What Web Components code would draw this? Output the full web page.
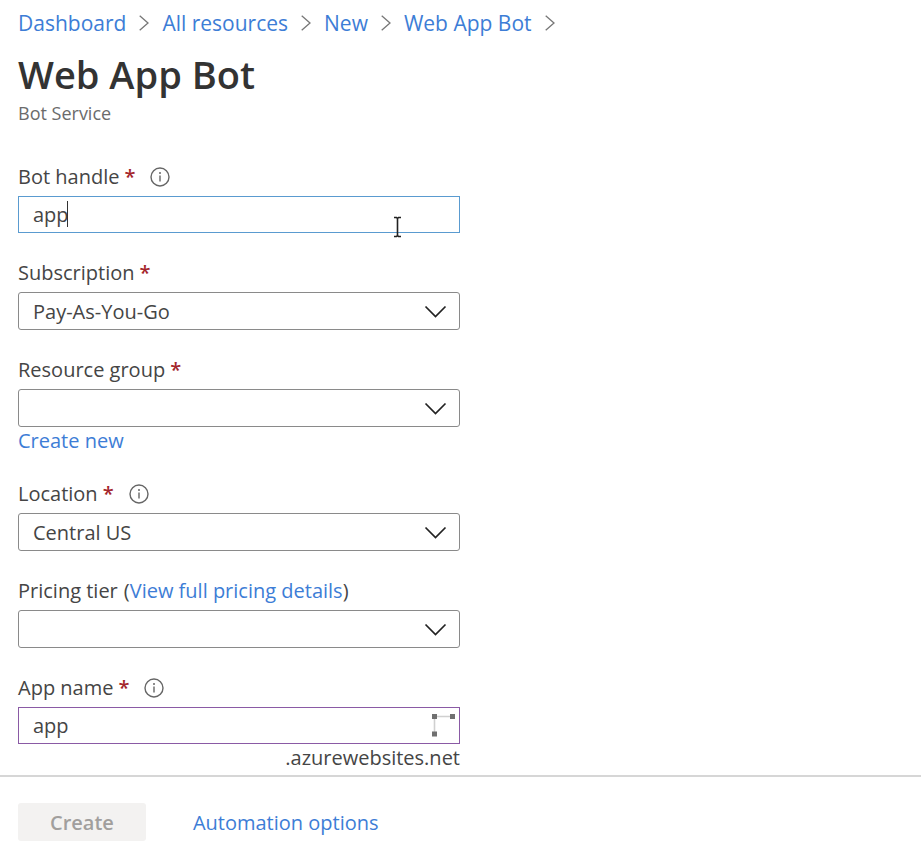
<!DOCTYPE html>
<html lang="en">
<head>
<meta charset="utf-8">
<title>Web App Bot</title>
<style>
  :root { --link: #3d7dd6; --text: #454545; --required: #a4262c; --line: #8a8a8a; }
  html, body { margin: 0; }
  body { font-family: "Open Sans", "Noto Sans", sans-serif; font-size: 20px; color: var(--text); background: #fff; }
</style>
</head>
<body>
<create-page>
  <bread-crumbs slot="header">
    <crumb-link>Dashboard</crumb-link>
    <crumb-link>All resources</crumb-link>
    <crumb-link>New</crumb-link>
    <crumb-link>Web App Bot</crumb-link>
  </bread-crumbs>
  <page-title slot="header" heading="Web App Bot" subtitle="Bot Service"></page-title>

  <text-field label="Bot handle" value="app" required info active></text-field>
  <select-field label="Subscription" value="Pay-As-You-Go" required></select-field>
  <select-field label="Resource group" required><text-link slot="hint">Create new</text-link></select-field>
  <select-field label="Location" value="Central US" required info></select-field>
  <select-field label="Pricing tier"><span slot="extra">(<text-link>View full pricing details</text-link>)</span></select-field>
  <text-field label="App name" value="app" required info validating><span slot="hint">.azurewebsites.net</span></text-field>

  <action-bar slot="footer"></action-bar>
</create-page>

<script>
const define = (name, html, setup) => {
  const template = document.createElement('template');
  template.innerHTML = html;
  customElements.define(name, class extends HTMLElement {
    constructor() {
      super();
      this.attachShadow({ mode: 'open' }).append(template.content.cloneNode(true));
    }
    connectedCallback() { if (setup) setup(this, this.shadowRoot); }
  });
};

define('create-page', `
  <style>
    :host { display: flex; flex-direction: column; min-height: 100vh; }
    main { flex: 1; padding: 6px 18px 4px; box-sizing: border-box; }
    form { display: flex; flex-direction: column; gap: 25px; max-width: 442px; margin-top: 36px; }
  </style>
  <main>
    <slot name="header"></slot>
    <form><slot></slot></form>
  </main>
  <slot name="footer"></slot>`);

define('bread-crumbs', `
  <style>
    :host { display: block; }
    nav { display: flex; flex-wrap: wrap; gap: 13px; line-height: 34px; font-size: 21px; }
  </style>
  <nav aria-label="Breadcrumb"><slot></slot></nav>`);

define('crumb-link', `
  <style>
    :host { display: inline-flex; align-items: center; gap: 13px; }
    a { color: var(--link); text-decoration: none; }
    svg { width: 10px; height: 16px; fill: none; stroke: #777; stroke-width: 1.3; }
  </style>
  <a href="#"><slot></slot></a>
  <svg viewBox="0 0 10 16" aria-hidden="true"><path d="M.7.7 9 8 .7 15.3"/></svg>`);

define('text-link', `<style>:host { display: inline; } a { color: var(--link); text-decoration: none; }</style><a href="#"><slot></slot></a>`);

define('page-title', `
  <style>
    :host { display: block; }
    h1 { margin: 8px 0 0; font-size: 38px; line-height: 52px; font-weight: 600; color: #333; }
    p { margin: 0; font-size: 18px; line-height: 26px; color: #6b6b6b; }
  </style>
  <h1></h1><p></p>`, (host, root) => {
  root.querySelector('h1').textContent = host.getAttribute('heading');
  root.querySelector('p').textContent = host.getAttribute('subtitle');
});

define('info-icon', `
  <style>
    :host { display: inline-flex; }
    :host([hidden]) { display: none; }
    svg { width: 20px; height: 20px; fill: none; stroke: #666; stroke-width: 1.4; }
    .dot { fill: #666; stroke: none; }
  </style>
  <svg viewBox="0 0 20 20" role="img" aria-label="More information">
    <circle cx="10" cy="10" r="9"/><path d="M10 8.4v6.2"/><circle class="dot" cx="10" cy="5.9" r="1"/>
  </svg>`);

const fieldStyles = `
  :host { display: block; }
  .caption { display: flex; align-items: center; line-height: 30px; margin-bottom: 4px; }
  .required { color: var(--required); margin-left: 5px; font-weight: 600; }
  info-icon { margin-left: 15px; }
  ::slotted([slot="extra"]) { margin-left: 6px; }
  .box { position: relative; }
  input, select { display: block; box-sizing: border-box; width: 100%; margin: 0; padding: 0 14px; font: inherit;
    color: inherit; background: #fff; border: 1px solid var(--line); outline: none; }
  .box svg { position: absolute; pointer-events: none; }
  .hint { line-height: 26px; padding-top: 1px; }
  [hidden] { display: none; }`;

const caption = `
  <div class="caption"><label for="control"></label><span class="required" aria-hidden="true">*</span>
    <info-icon></info-icon><slot name="extra"></slot></div>`;

const setupCaption = (host, root) => {
  root.querySelector('label').textContent = host.getAttribute('label');
  root.querySelector('.required').hidden = !host.hasAttribute('required');
  root.querySelector('info-icon').hidden = !host.hasAttribute('info');
  root.querySelector('.hint').hidden = !host.querySelector('[slot="hint"]');
  root.querySelector('#control').required = host.hasAttribute('required');
};

define('text-field', `
  <style>${fieldStyles}
    input { height: 37px; box-shadow: none; }
    :host([active]) input { border-color: #5a9bd0; }
    :host([validating]) input { border-color: #8a5aa5; }
    .hint { text-align: right; }
    .caret { display: none; position: absolute; left: 49px; top: 5px; width: 1px; height: 26px; background: #333; }
    :host([active]) .caret { display: block; }
    .pointer { display: none; right: 57px; top: 20px; width: 11px; height: 22px; }
    :host([active]) .pointer { display: block; }
    .progress { display: none; right: 4px; top: 5px; width: 26px; height: 26px; }
    :host([validating]) .progress { display: block; }
  </style>
  ${caption}
  <div class="box">
    <input id="control" type="text">
    <span class="caret"></span>
    <svg class="pointer" viewBox="0 0 11 22" aria-hidden="true"><path d="M2 1.5h2.5l1 1 1-1H9M5.5 2v18M2 20.5h2.5l1-1 1 1H9" fill="none" stroke="#222" stroke-width="1.6"/></svg>
    <svg class="progress" viewBox="0 0 26 26" aria-hidden="true">
      <path d="M4.5 22V4.500H22" fill="none" stroke="#d0d0d0" stroke-width="1.6"/>
      <path d="M2 2h5v5H2zM20 2h5v5h-5zM2 19.5h5v5H2z" fill="#707070"/>
    </svg>
  </div>
  <div class="hint"><slot name="hint"></slot></div>`, (host, root) => {
  setupCaption(host, root);
  root.querySelector('input').value = host.getAttribute('value') || '';
});

define('select-field', `
  <style>${fieldStyles}
    select { height: 38px; appearance: none; border-radius: 3px; }
    .arrow { right: 13px; top: 13px; width: 23px; height: 13px; }
  </style>
  ${caption}
  <div class="box">
    <select id="control"><option></option></select>
    <svg class="arrow" viewBox="0 0 23 13" aria-hidden="true"><path d="M1.5 1.5 11.500 11.500 21.500 1.500" fill="none" stroke="#222" stroke-width="1.7"/></svg>
  </div>
  <div class="hint"><slot name="hint"></slot></div>`, (host, root) => {
  setupCaption(host, root);
  root.querySelector('option').textContent = host.getAttribute('value') || '';
});

define('action-bar', `
  <style>
    :host { display: flex; align-items: center; gap: 47px; padding: 26px 18px 2px; border-top: 2px solid #d6d6d6; }
    button { height: 38px; padding: 0 32px; font: inherit; font-weight: 600; color: #a19f9d; background: #f3f2f1; border: 0; border-radius: 3px; }
  </style>
  <button type="button" disabled>Create</button>
  <text-link>Automation options</text-link>`);
</script>
</body>
</html>
